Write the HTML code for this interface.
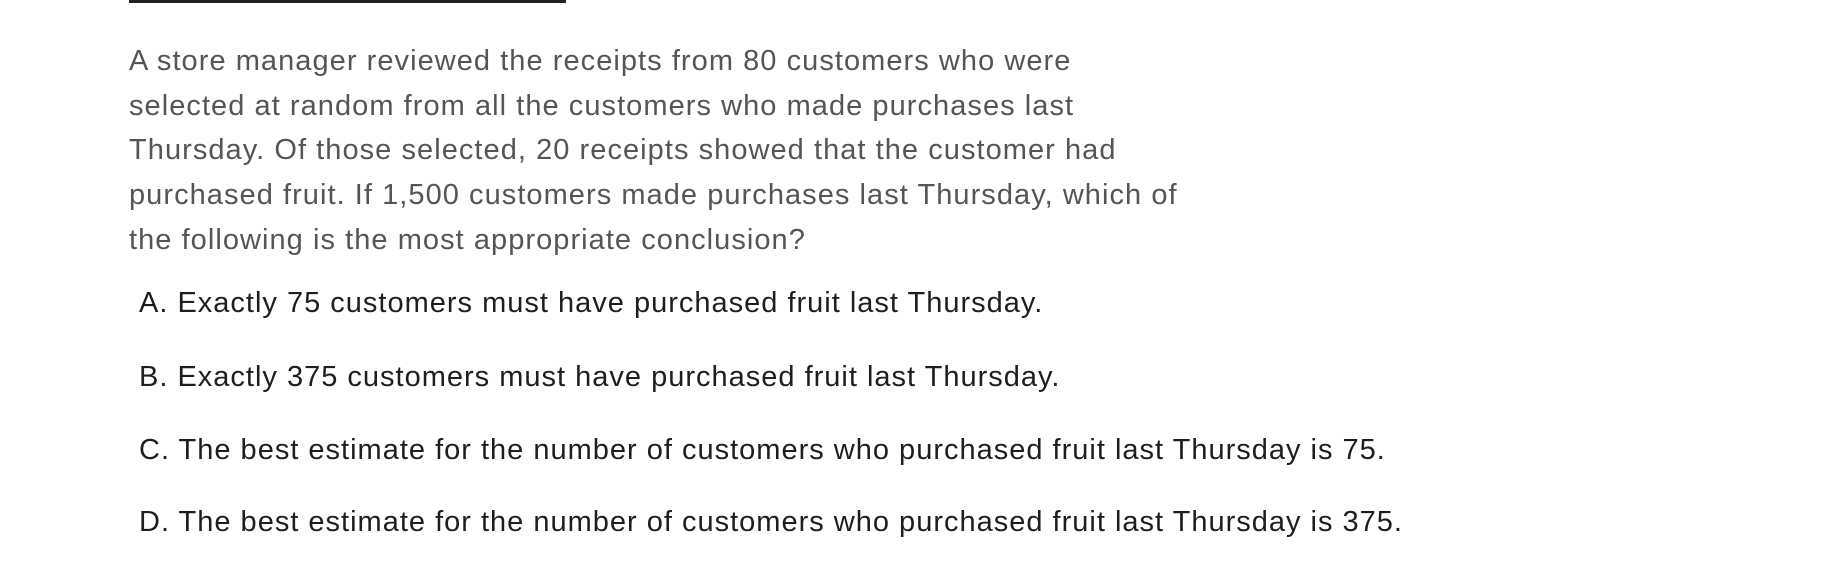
<!DOCTYPE html>
<html><head><meta charset="utf-8"><style>
body{margin:0;width:1836px;height:569px;background:#fff;overflow:hidden;font-family:"Liberation Sans",sans-serif;position:relative}
.rule{position:absolute;left:129px;top:0;width:437px;height:3px;background:#222}
.p{position:absolute;left:129px;top:39px;font-size:29px;line-height:44.7px;color:#555;white-space:nowrap;letter-spacing:1.05px}
.o{position:absolute;left:139px;font-size:29px;color:#1e1e1e;white-space:nowrap;letter-spacing:1.0px;line-height:32px}
</style></head><body>
<div class="rule"></div>
<div class="p">A store manager reviewed the receipts from 80 customers who were<br>selected at random from all the customers who made purchases last<br>Thursday. Of those selected, 20 receipts showed that the customer had<br>purchased fruit. If 1,500 customers made purchases last Thursday, which of<br>the following is the most appropriate conclusion?</div>
<div class="o" style="top:287px">A. Exactly 75 customers must have purchased fruit last Thursday.</div>
<div class="o" style="top:361px">B. Exactly 375 customers must have purchased fruit last Thursday.</div>
<div class="o" style="top:434px">C. The best estimate for the number of customers who purchased fruit last Thursday is 75.</div>
<div class="o" style="top:506px">D. The best estimate for the number of customers who purchased fruit last Thursday is 375.</div>
</body></html>
